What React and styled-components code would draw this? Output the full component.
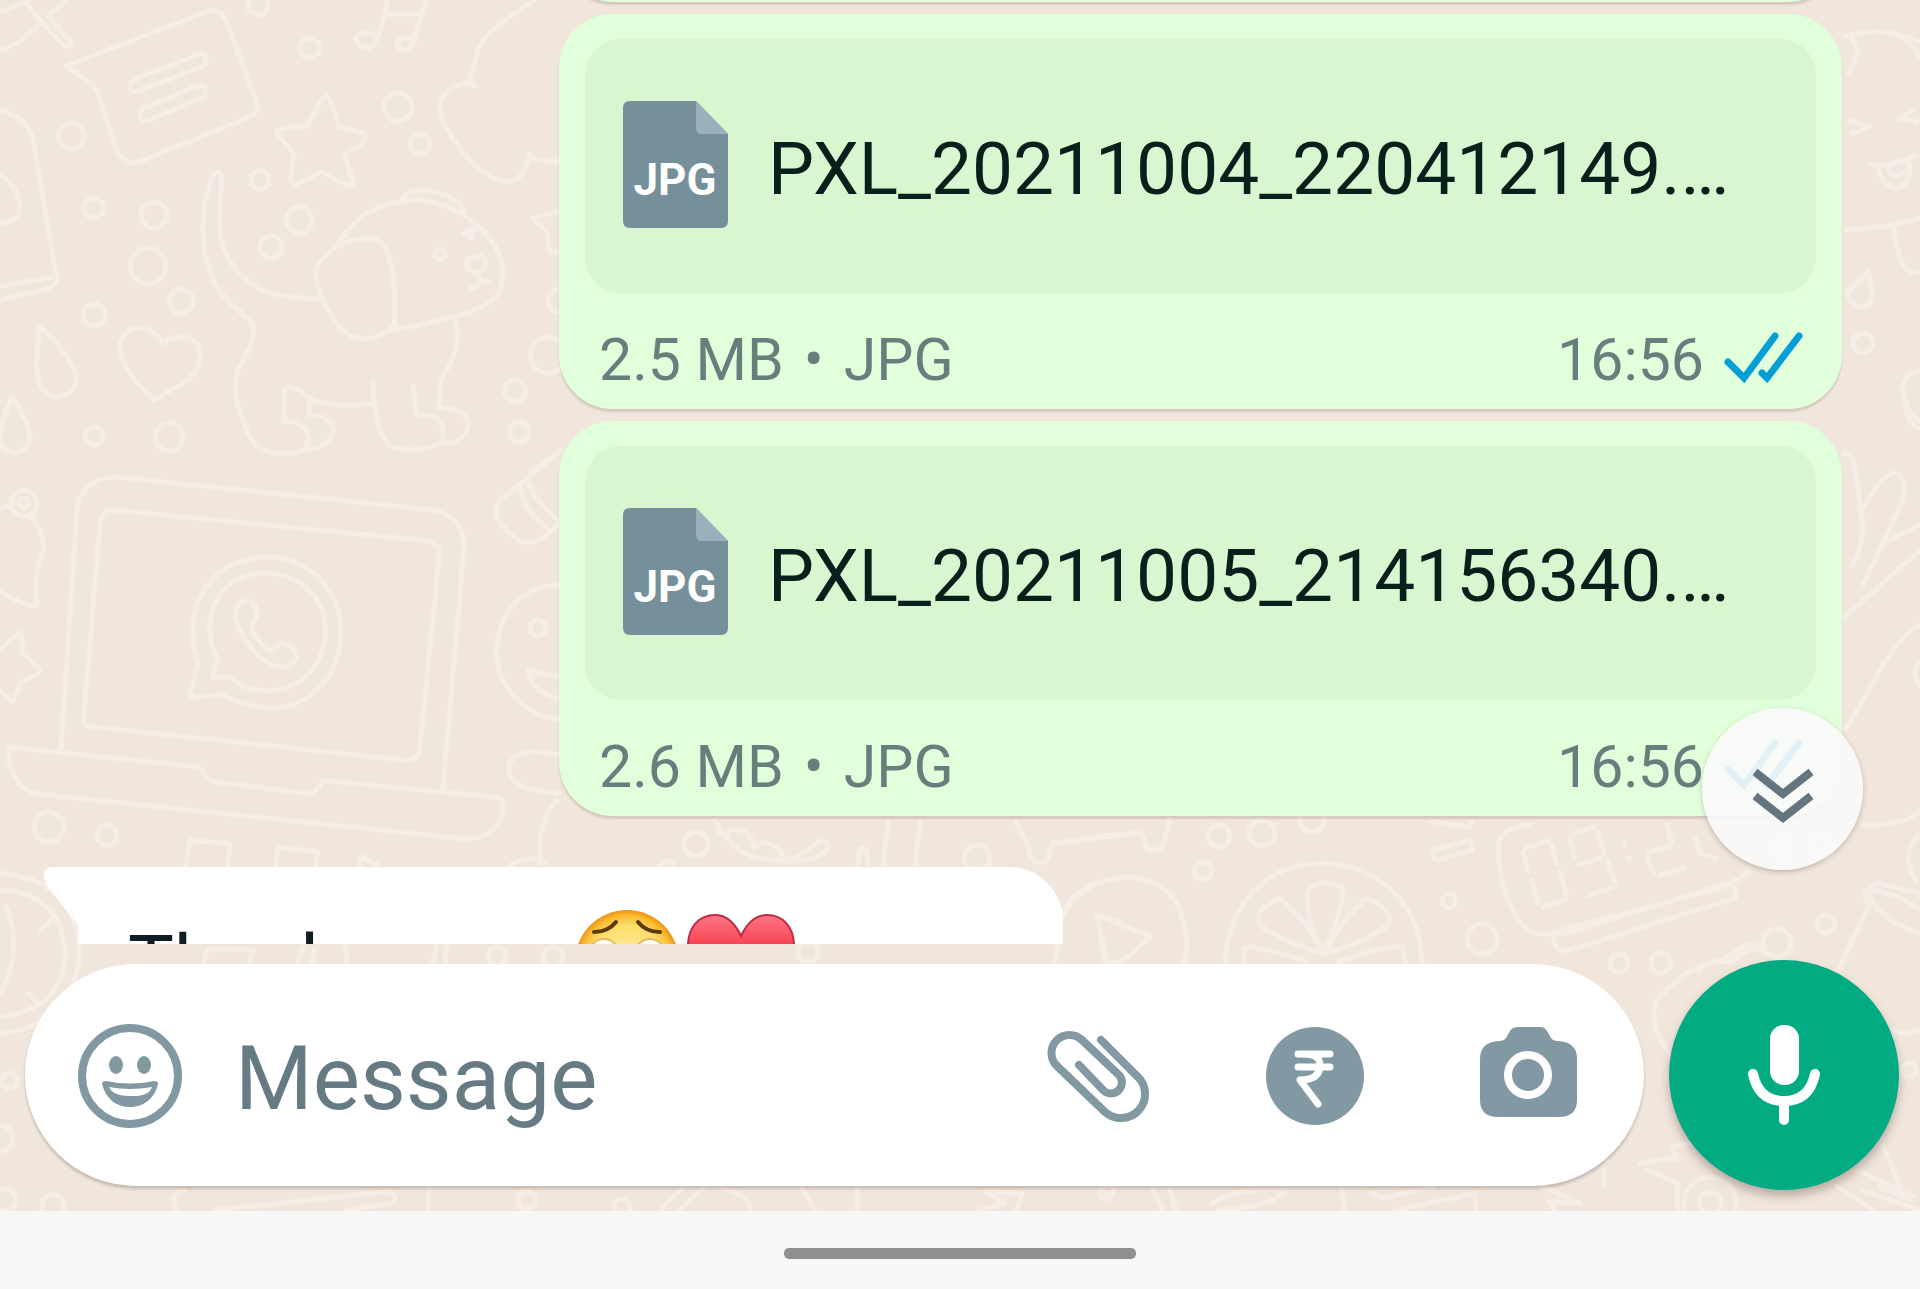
import styled, { createGlobalStyle } from "styled-components";

const documents = [
  { id: 1, name: "PXL_20211004_220412149.…", size: "2.5 MB", time: "16:56" },
  { id: 2, name: "PXL_20211005_214156340.…", size: "2.6 MB", time: "16:56" },
];

// Wallpaper bubbles: cx, cy, r
const dots = [
  [258, 5, 10], [310, 48, 10], [398, 107, 14], [420, 144, 10], [71, 136, 13],
  [94, 208, 10], [154, 215, 13], [148, 266, 18], [181, 301, 12], [94, 315, 11],
  [260, 180, 9], [299, 220, 13], [271, 247, 11], [440, 254, 5], [94, 436, 9],
  [169, 437, 14], [515, 391, 11], [519, 432, 10], [548, 355, 18], [560, 301, 12],
  [24, 503, 13], [24, 503, 5], [49, 827, 15], [107, 835, 10], [538, 628, 8],
  [696, 844, 12], [977, 858, 13], [667, 869, 8], [1219, 836, 11], [1262, 833, 13],
  [1203, 871, 9], [1312, 820, 12], [1449, 901, 7], [1482, 939, 15],
  [1781, 848, 9], [1823, 847, 11], [1826, 924, 9], [1619, 963, 9], [1661, 963, 10],
  [1777, 943, 14], [1863, 343, 10], [808, 952, 10], [9, 1081, 8], [0, 1138, 13],
  [5, 1200, 11], [53, 1206, 11], [527, 1200, 9], [622, 1207, 8], [1106, 1192, 7],
  [1710, 1203, 26], [1710, 1203, 11], [497, 956, 9], [553, 957, 10], [1909, 1070, 7],
];

const doodles = [
  {
    transform: "scale(0.357 0.3333)",
    paths: [
      "M0 35Q50 20 80 0M75 10Q95 40 115 65L180 140Q205 140 195 120L135 48L185 0M115 65Q60 135 0 150",
      "M185 198L580 35Q615 20 635 65L720 310Q725 340 690 355L390 485Q345 500 325 445L270 270Q260 250 185 198Z",
      "M370 240L560 162Q590 165 570 198L385 275Q350 275 370 240ZM400 325L555 257Q590 260 570 292L415 362Q380 360 400 325Z",
      "M1085 0Q1070 110 1040 140Q1010 155 995 115Q1020 85 1055 110M1195 0L1155 135Q1130 170 1110 130Q1125 100 1165 120M1080 42H1185",
      "M1500 0C1420 55 1335 110 1335 170L1312 250L1330 258M1325 250C1250 245 1210 310 1245 375C1285 450 1360 550 1430 545Q1475 530 1482 462Q1490 485 1568 485",
      "M915 288Q925 290 950 380L1020 400Q1040 425 965 462L990 550Q985 570 900 515L825 558Q805 555 825 465L775 400Q770 380 860 380Q895 300 915 288Z",
      "M0 330Q70 350 90 410L160 835Q165 855 120 870L0 900M0 860L145 832M0 520Q50 560 55 620Q55 670 0 668",
      "M110 975Q210 1080 215 1135Q210 1190 150 1190Q105 1180 103 1100ZM35 1190Q85 1280 85 1310Q75 1360 35 1358Q0 1350 0 1310Q0 1270 35 1190Z",
      "M430 1200C370 1140 320 1065 340 1020Q360 980 400 985Q440 995 455 1030Q510 990 550 1030C580 1090 545 1130 500 1158Z",
      "M900 898C760 890 720 880 655 800C600 720 615 650 622 530Q610 500 595 530C560 620 560 740 590 820C620 910 690 940 710 975C715 1060 660 1080 658 1160C665 1230 690 1300 715 1335Q750 1370 845 1355Q880 1320 850 1280Q830 1260 795 1265L798 1165Q815 1150 868 1195L865 1245Q925 1245 935 1290Q920 1345 860 1350M868 1195Q920 1225 1045 1210M1045 1150Q1050 1330 1110 1345Q1170 1360 1235 1330Q1255 1285 1220 1255Q1200 1240 1168 1250L1158 1160M1275 955C1300 1080 1230 1120 1232 1160L1230 1225Q1305 1220 1312 1275Q1300 1335 1235 1330",
      "M935 745C990 660 1040 605 1170 600C1300 610 1400 720 1408 800C1415 890 1380 920 1270 950Q1150 985 1095 988M1125 598Q1140 570 1180 570Q1290 580 1300 640M935 745Q1050 680 1085 755C1110 830 1105 920 1105 975C1060 1030 980 1035 935 960C890 880 880 830 885 810Q900 770 935 745Z",
      "M1305 790Q1310 770 1330 775Q1360 755 1360 795Q1350 820 1325 815Q1300 805 1305 790ZM1340 820L1345 840M1315 865Q1340 870 1345 840L1370 848M1300 700L1330 685L1320 715Z",
      "M1560 635L1490 655L1530 690L1540 755L1560 755M1490 1410Q1530 1390 1568 1350",
    ],
  },
  {
    transform: "translate(0 460) scale(0.357 0.3333)",
    paths: [
      "M170 875L215 160Q220 60 320 50L1210 150Q1300 170 1300 260L1240 995M235 770L280 190Q285 150 320 150L1195 242Q1235 250 1230 290L1175 870Q1170 905 1130 900L260 800Q225 795 235 770Z",
      "M25 862L550 920Q570 925 575 950Q580 965 620 968L880 1003Q895 975 905 962L1390 1012Q1410 1015 1410 1035Q1405 1130 1310 1138L110 1003Q30 990 22 870Z",
      "M530 712L555 610C500 430 600 290 755 290C880 300 955 400 955 520C950 650 870 745 755 745C700 740 670 730 630 705Z",
      "M595 652L610 600C550 480 610 340 745 338C860 345 915 430 912 520C905 610 850 690 750 692C700 690 680 680 640 650Z",
      "M660 455Q665 425 695 422Q720 430 720 470L705 500Q720 550 755 570Q775 570 785 548Q830 560 832 590Q825 620 785 622C720 610 655 510 660 455Z",
      "M0 145Q30 140 40 130M85 165Q125 220 122 265Q90 350 105 435Q90 450 0 395M0 570L55 518Q65 520 62 575L112 630Q110 645 60 665L35 725Q30 730 0 690",
      "M1540 0L1400 120Q1375 160 1405 195Q1450 250 1480 248Q1530 240 1568 185M1455 75Q1470 165 1535 205M1475 55Q1500 130 1568 185",
      "M1568 375C1440 380 1390 490 1390 580C1395 680 1470 770 1568 778M1568 652L1480 632Q1490 700 1568 718M1568 885Q1440 855 1425 920Q1420 990 1568 1000M1560 1020Q1500 1090 1515 1210M1425 1220Q1470 1180 1530 1210",
      "M520 1230L532 1140L645 1152L635 1230M770 1230L780 1162L890 1175L885 1230M1005 1230L1010 1190L1060 1215",
    ],
  },
  {
    transform: "translate(1060 810) scale(0.5485 0.3333)",
    paths: [
      "M0 100L140 68Q155 75 155 110Q175 135 188 105L200 30M5 320C40 180 190 150 220 310Q240 400 225 465M68 315L165 380L118 450L95 460L85 480Z",
      "M302 465C300 300 370 160 480 160C590 165 660 300 660 465M480 430Q440 300 455 230Q485 210 515 230Q520 290 480 430ZM480 430Q450 330 400 265Q350 300 365 345Q395 390 480 430ZM485 430Q510 330 560 265Q610 300 598 345Q560 395 485 430ZM335 465L335 415Q350 400 450 455M630 465L625 412Q605 400 510 455",
      "M680 120L745 92Q755 105 750 120L690 150Q675 145 680 120ZM680 35L745 52L752 35",
      "M860 45Q810 50 800 95C795 200 820 300 845 350Q860 375 890 372L1200 235Q1245 205 1255 185M900 380L1215 222Q1240 235 1230 265L930 420Q900 430 900 380Z",
      "M1420 480L1475 285Q1455 240 1490 220L1568 250M1568 370Q1480 320 1475 240Q1530 250 1568 300M1225 455Q1260 400 1285 425M1165 480Q1175 450 1225 455M1568 70Q1530 130 1560 210M1465 45Q1540 50 1568 0",
    ],
  },
  {
    transform: "translate(1500 400) scale(0.3333 0.357)",
    paths: [
      "M1030 150Q1060 145 1065 200L1090 350Q1090 410 1055 465M1090 300Q1160 195 1190 205Q1225 220 1205 290L1090 515M1150 400L1260 350M1025 615L1260 420M1260 630Q1220 640 1150 740L1040 920M1260 730Q1230 760 1260 800M1215 0Q1220 70 1260 80",
      // alarm clock digits
      "M75 1255L145 1235M70 1268L85 1320M95 1345L115 1408M130 1420L198 1398M155 1245L170 1300M180 1322L200 1385",
      "M220 1215L285 1195M210 1232L225 1285M235 1302L305 1282M295 1212L312 1270M322 1292L345 1352M265 1388L338 1366",
      "M374 1238V1244M388 1282V1288M500 1188L515 1238M445 1268L508 1250M442 1282L460 1325M480 1332L550 1310M585 1225L600 1270L650 1285",
    ],
  },
  {
    transform: "translate(1800) scale(0.3333 0.3827)",
    paths: [
      "M135 95Q250 65 360 110M150 95Q195 130 145 190M300 95Q340 115 360 150M150 315L210 330L155 350M340 285L295 310L350 318M210 430Q290 435 345 405M235 440Q250 495 295 492Q340 475 325 420M265 440Q275 470 310 450M135 600Q250 600 360 570M280 590Q300 730 360 710M205 710Q230 790 200 800Q150 810 142 765ZM360 970Q300 975 310 1030Q320 1080 360 1100",
    ],
  },
  {
    transform: "translate(0 840) scale(0.4082 0.3333)",
    paths: [
      "M0 100Q190 120 195 340Q180 560 0 580M0 150Q155 160 160 350Q150 510 0 530M15 200Q60 330 0 460M100 270L125 240M70 460L95 490M500 365L510 325L620 330L610 370M730 365L745 320M765 365L770 325M850 365L845 320M1060 365L1070 320M1090 365L1095 320",
      "M430 1110Q415 1060 450 1052M530 1110L950 1055Q980 1070 960 1090L850 1110M1050 1040V1110",
    ],
  },
  {
    transform: "translate(560 820) scale(0.357 0.3333)",
    paths: [
      "M435 0Q480 100 560 115Q720 140 750 85Q760 60 725 65Q630 150 620 95Q570 50 545 85Q530 20 480 30Q460 60 445 35M905 135L920 5M995 135L1010 5M835 135Q835 60 860 95L862 135M1275 5Q1310 60 1320 115Q1350 145 1368 110L1380 70L1568 42M1410 280Q1440 190 1568 175M1385 430L1395 375M1530 425L1505 285L1568 305",
    ],
  },
  {
    transform: "translate(0 1170) scale(1.2245 0.3333)",
    paths: [
      "M540 120Q550 70 560 50M555 120L575 50M590 55Q615 80 612 120M655 50L665 120M700 50V120M800 120L820 100L805 65L835 70L830 120M900 50L905 80L912 50M940 50L950 120M955 50L960 120M990 100Q1010 50 1050 60Q1040 110 995 120M1095 50L1098 120M1120 70L1130 85L1170 50M1140 120L1205 70V120M1260 50L1290 100L1265 95L1270 120M1310 0V50M1345 0L1370 40V120M1500 50L1530 120M1520 60L1568 120M1535 50L1560 90",
    ],
  },
  {
    transform: "translate(1640 930) scale(0.3333)",
    paths: [
      "M90 370Q20 290 50 210Q150 100 250 90Q330 20 370 60M600 110L650 0M760 300Q800 320 840 300M0 700Q80 680 110 690L95 650L150 640M730 650L780 770M650 720L820 800",
    ],
  },
];

const Wallpaper = () => (
  <WallpaperSvg viewBox="0 0 1920 1211" preserveAspectRatio="xMidYMax slice" aria-hidden="true">
    {doodles.map((group) => (
      <g key={group.transform} transform={group.transform}>
        {group.paths.map((d) => (
          <path key={d} d={d} vectorEffect="non-scaling-stroke" />
        ))}
      </g>
    ))}
    {dots.map(([cx, cy, r]) => (
      <circle key={`${cx}-${cy}-${r}`} cx={cx} cy={cy} r={r} />
    ))}
  </WallpaperSvg>
);

const FileIcon = () => (
  <svg width="105" height="127" viewBox="0 0 105 127" role="img" aria-label="JPG file">
    <path d="M7 0H73L105 33V120Q105 127 98 127H7Q0 127 0 120V7Q0 0 7 0Z" fill="#75909b" />
    <path d="M73 0L105 33H79Q73 33 73 27Z" fill="#9ab0bb" />
    <text x="52" y="94" textAnchor="middle" fontFamily="Roboto, sans-serif" fontWeight="700" fontSize="44" fill="#fff">
      JPG
    </text>
  </svg>
);

const ReadTicks = () => (
  <svg width="80" height="56" viewBox="0 0 80 56" fill="none" stroke="#049fd5" strokeWidth="7" strokeLinecap="round">
    <path d="M4 30L20 46L51 4" />
    <path d="M38 41L43 46L75 4" />
  </svg>
);

const DocumentMessage = ({ name, size, time }) => (
  <SentBubble>
    <FileCard>
      <FileIcon />
      <FileName>{name}</FileName>
    </FileCard>
    <FileFooter>
      <FileMeta>
        <span>{size}</span>
        <span>•</span>
        <span>JPG</span>
      </FileMeta>
      <Receipt>
        <time>{time}</time>
        <ReadTicks />
      </Receipt>
    </FileFooter>
  </SentBubble>
);

const WearyFace = () => (
  <svg width="106" height="106" viewBox="0 0 106 106" role="img" aria-label="Weary face">
    <defs>
      <radialGradient id="face">
        <stop offset="0" stopColor="#fff0a8" />
        <stop offset="0.7" stopColor="#fddf6d" />
        <stop offset="0.9" stopColor="#fbb92e" />
        <stop offset="1" stopColor="#ea9416" />
      </radialGradient>
    </defs>
    <circle cx="53" cy="53" r="52" fill="url(#face)" />
    <path d="M20 23Q34 23 42 13M86 23Q72 23 64 13" fill="none" stroke="#5c3c0c" strokeWidth="4" strokeLinecap="round" />
    <circle cx="30" cy="45" r="15" fill="#fff" stroke="#e4b860" strokeWidth="2" />
    <circle cx="76" cy="45" r="15" fill="#fff" stroke="#e4b860" strokeWidth="2" />
    <path d="M34 86Q53 62 72 86Z" fill="#5c3c0c" />
  </svg>
);

const RedHeart = () => (
  <svg width="108" height="106" viewBox="0 0 108 106" role="img" aria-label="Red heart">
    <defs>
      <linearGradient id="heart" x2="0" y2="1">
        <stop offset="0" stopColor="#fb7787" />
        <stop offset="0.35" stopColor="#f93c4b" />
        <stop offset="1" stopColor="#d81f38" />
      </linearGradient>
    </defs>
    <path
      d="M54 27C48 14 39 6 28 6C12 6 1 18 1 37C1 62 28 82 54 102C80 82 107 62 107 37C107 18 96 6 80 6C69 6 60 14 54 27Z"
      fill="url(#heart)"
      stroke="#c02a49"
      strokeWidth="2"
    />
  </svg>
);

const SmileyIcon = () => (
  <svg width="104" height="104" viewBox="0 0 104 104">
    <circle cx="52" cy="52" r="48" fill="none" stroke="#8299a3" strokeWidth="8" />
    <ellipse cx="38" cy="41" rx="7" ry="9" fill="#8299a3" />
    <ellipse cx="66" cy="41" rx="7" ry="9" fill="#8299a3" />
    <path
      d="M28 57Q24 57 24 60C28 75 38 83 52 83C66 83 77 74 80 60Q80 57 76 57Q52 62 28 57ZM31 63Q52 67 74 63Q71 73 52 72Q35 72 31 63Z"
      fill="#8299a3"
      fillRule="evenodd"
    />
  </svg>
);

const PaperclipIcon = () => (
  <svg width="104" height="94" viewBox="0 0 104 94" fill="none" stroke="#8299a3" strokeWidth="8" strokeLinecap="round">
    <path d="M55 11L91 47A23 23 0 0 1 59 83L11 37A18 18 0 0 1 36 11L73 46A11 11 0 0 1 58 62L33 36" />
  </svg>
);

const RupeeIcon = () => (
  <svg width="98" height="98" viewBox="0 0 98 98">
    <circle cx="49" cy="49" r="49" fill="#8299a3" />
    <path
      d="M32 27H64M32 40H64M34 27Q54 26 54 38Q54 53 34 53L52 77"
      fill="none"
      stroke="#fff"
      strokeWidth="7"
      strokeLinecap="round"
      strokeLinejoin="round"
    />
  </svg>
);

const CameraIcon = () => (
  <svg width="97" height="98" viewBox="0 0 97 98">
    <path
      d="M38 0H60Q65 0 67 4L71 11Q73 14 78 14Q97 15 97 32V73Q97 90 79 90H18Q0 90 0 73V32Q0 15 19 14Q24 14 26 11L30 4Q32 0 38 0Z"
      fill="#8299a3"
    />
    <circle cx="48" cy="48" r="20" fill="none" stroke="#fff" strokeWidth="8" />
  </svg>
);

const MicIcon = () => (
  <svg width="72" height="100" viewBox="0 0 72 100">
    <rect x="22" y="0" width="29" height="60" rx="14" fill="#fff" />
    <path
      d="M5 49C9 68 20 76 36 76C52 76 63 68 67 49M36 76V95"
      fill="none"
      stroke="#fff"
      strokeWidth="10"
      strokeLinecap="round"
    />
  </svg>
);

const App = () => {
  return (
    <Screen>
      <GlobalStyle />
      <Chat>
        <Wallpaper />
        <Messages>
          <PreviousBubble />
          {documents.map((doc) => (
            <DocumentMessage key={doc.id} {...doc} />
          ))}
          <ReceivedRow>
            <Tail width="35" height="78" viewBox="0 0 35 78" aria-hidden="true">
              <path d="M8 0H35V58L4 19Q-4 2 8 0Z" fill="#fff" />
            </Tail>
            <ReceivedBubble>
              <ReceivedText>Thank you</ReceivedText>
              <Emojis>
                <WearyFace />
                <RedHeart />
              </Emojis>
            </ReceivedBubble>
          </ReceivedRow>
          <ScrollDown type="button" aria-label="Scroll to latest">
            <svg width="60" height="56" viewBox="0 0 60 56" fill="none" stroke="#64757f" strokeWidth="8">
              <path d="M2 4L30 26L58 4M2 28L30 50L58 28" />
            </svg>
          </ScrollDown>
        </Messages>
        <Composer>
          <InputPill>
            <IconButton type="button" aria-label="Emoji">
              <SmileyIcon />
            </IconButton>
            <MessageInput type="text" placeholder="Message" aria-label="Message" />
            <Attachments>
              <IconButton type="button" aria-label="Attach">
                <PaperclipIcon />
              </IconButton>
              <IconButton type="button" aria-label="Payment">
                <RupeeIcon />
              </IconButton>
              <IconButton type="button" aria-label="Camera">
                <CameraIcon />
              </IconButton>
            </Attachments>
          </InputPill>
          <MicButton type="button" aria-label="Record voice message">
            <MicIcon />
          </MicButton>
        </Composer>
      </Chat>
      <NavigationBar>
        <NavigationHandle />
      </NavigationBar>
    </Screen>
  );
};

const GlobalStyle = createGlobalStyle`
  * {
    box-sizing: border-box;
  }
  body {
    margin: 0;
    font-family: Roboto, "Liberation Sans", sans-serif;
  }
  button {
    border: 0;
    padding: 0;
    background: none;
    cursor: pointer;
  }
  svg {
    display: block;
    flex-shrink: 0;
  }
`;

const Screen = styled.div`
  display: flex;
  flex-direction: column;
  height: 100vh;
`;

const Chat = styled.main`
  position: relative;
  display: flex;
  flex-direction: column;
  flex: 1;
  min-height: 0;
  background: #f0e6dc;
`;

const WallpaperSvg = styled.svg`
  position: absolute;
  inset: 0;
  width: 100%;
  height: 100%;
  fill: none;
  stroke: #f6eee6;
  stroke-width: 5px;
  stroke-linejoin: round;
  stroke-linecap: round;
`;

const Messages = styled.section`
  position: relative;
  display: flex;
  flex-direction: column;
  gap: 12px;
  flex: 1;
  min-height: 0;
  padding: 0 78px;
  overflow: hidden;
`;

const SentBubble = styled.article`
  flex-shrink: 0;
  align-self: flex-end;
  width: 73%;
  max-width: 1283px;
  padding: 25px 26px 0;
  border-radius: 54px;
  background: #e1ffda;
  box-shadow: 0 3px 2px rgba(110, 90, 70, 0.2);
`;

const PreviousBubble = styled(SentBubble)`
  height: 108px;
  margin-top: -106px;
`;

const FileCard = styled.div`
  display: flex;
  align-items: center;
  gap: 40px;
  height: 254px;
  padding: 0 38px 3px;
  border-radius: 36px;
  background: #d9f6d1;
`;

const FileName = styled.div`
  min-width: 0;
  padding-top: 8px;
  font-size: 73px;
  line-height: 84px;
  white-space: nowrap;
  color: #06201c;
`;

const FileFooter = styled.footer`
  display: flex;
  align-items: center;
  justify-content: space-between;
  height: 116px;
  padding: 18px 12px 0 14px;
  font-size: 59px;
  line-height: 68px;
  color: #667f7c;
`;

const FileMeta = styled.div`
  display: flex;
  gap: 20px;
`;

const Receipt = styled.div`
  display: flex;
  align-items: center;
  gap: 20px;
`;

const ReceivedRow = styled.div`
  position: relative;
  display: flex;
  flex-shrink: 0;
  margin-top: 39px;
`;

const Tail = styled.svg`
  position: absolute;
  left: -35px;
  top: 0;
`;

const ReceivedBubble = styled.article`
  display: flex;
  align-items: center;
  width: 56%;
  max-width: 985px;
  height: 190px;
  padding: 0 50px;
  border-radius: 0 54px 54px 54px;
  background: #fff;
  font-size: 77px;
  line-height: 90px;
  color: #101d24;
`;

const ReceivedText = styled.span`
  padding-top: 4px;
`;

const Emojis = styled.div`
  display: flex;
  gap: 7px;
  margin-left: auto;
  padding-right: 218px;
`;

const ScrollDown = styled.button`
  position: absolute;
  right: 57px;
  bottom: 74px;
  display: flex;
  align-items: center;
  justify-content: center;
  width: 161px;
  height: 162px;
  padding-top: 14px;
  border-radius: 50%;
  background: rgba(251, 250, 249, 0.9);
  box-shadow: 0 2px 5px rgba(90, 70, 60, 0.3);
`;

const Composer = styled.form`
  position: relative;
  display: flex;
  align-items: center;
  gap: 25px;
  padding: 16px 21px 21px 25px;
`;

const InputPill = styled.div`
  display: flex;
  align-items: center;
  flex: 1;
  min-width: 0;
  height: 222px;
  padding: 2px 67px 0 53px;
  border-radius: 111px;
  background: #fff;
  box-shadow: 0 3px 3px rgba(80, 60, 50, 0.25);
`;

const MessageInput = styled.input`
  flex: 1;
  min-width: 0;
  height: 120px;
  margin-left: 53px;
  padding: 4px 0 0;
  border: 0;
  outline: 0;
  background: transparent;
  font-family: inherit;
  font-size: 89px;
  color: #101d24;

  &::placeholder {
    color: #667a84;
    opacity: 1;
  }
`;

const Attachments = styled.div`
  display: flex;
  align-items: center;
  gap: 116px;
`;

const IconButton = styled.button`
  flex-shrink: 0;
`;

const MicButton = styled.button`
  display: flex;
  align-items: center;
  justify-content: center;
  flex-shrink: 0;
  width: 230px;
  height: 230px;
  border-radius: 50%;
  background: #02ab82;
  box-shadow: 0 6px 10px rgba(80, 60, 60, 0.35);
`;

const NavigationBar = styled.nav`
  display: flex;
  justify-content: center;
  align-items: flex-start;
  position: relative;
  height: 78px;
  padding-top: 37px;
  background: #f6f7f9;
`;

const NavigationHandle = styled.div`
  width: 352px;
  height: 11px;
  border-radius: 5px;
  background: #8f9092;
`;

export default App;
